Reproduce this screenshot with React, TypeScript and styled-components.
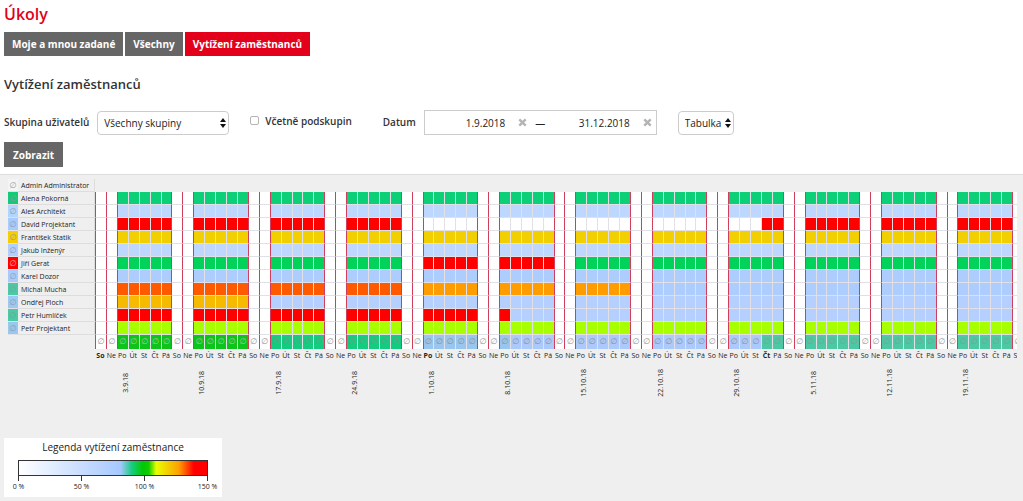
import React from "react";
import styled, { createGlobalStyle } from "styled-components";

const GlobalStyle = createGlobalStyle`
  *, *::before, *::after { box-sizing: border-box; }
  body {
    margin: 0;
    background: #ffffff;
    color: #222222;
    font-family: "Open Sans", "Noto Sans", sans-serif;
    font-size: 10px;
    line-height: 16px;
  }
  button, input, select { font: inherit; color: inherit; margin: 0; }
`;

const RED = "#e2001a";
const LINE = "#e0e0e6";
const WEEK_LINE = "#cf3f5c";

const Page = styled.main`
  display: flex;
  flex-direction: column;
  min-height: 100vh;
`;

const Header = styled.header`
  padding: 4px 4px 7px;
`;

const Title = styled.h1`
  margin: 0 0 8px;
  color: ${RED};
  font-size: 16px;
  line-height: 20px;
  font-weight: 600;
`;

const Tabs = styled.nav`
  display: flex;
  gap: 2px;
`;

const Tab = styled.a<{ $active?: boolean }>`
  padding: 4px 8px;
  background: ${(p) => (p.$active ? RED : "#666666")};
  color: #ffffff;
  font-weight: 700;
  text-decoration: none;
`;

const Subtitle = styled.h2`
  margin: 18px 0 16px;
  color: #333333;
  font-size: 13px;
  line-height: 20px;
  font-weight: 600;
`;

const Filters = styled.form`
  display: flex;
  flex-wrap: wrap;
  align-items: center;
  row-gap: 7px;
`;

const Label = styled.label`
  margin: 0 8px 2px 0;
  color: #333333;
  font-weight: 600;
`;

const SelectBox = styled.span<{ $width: number }>`
  position: relative;
  width: ${(p) => p.$width}px;
  svg {
    position: absolute;
    right: 3px;
    top: 7px;
    pointer-events: none;
  }
`;

const Select = styled.select`
  display: block;
  width: 100%;
  height: 24px;
  padding: 0 6px;
  appearance: none;
  border: 1px solid #cccccc;
  border-radius: 4px;
  background: #ffffff;
`;

const CheckLabel = styled.label`
  display: flex;
  align-items: center;
  gap: 6px;
  margin: 0 31px 4px 21px;
  color: #333333;
  font-weight: 600;
`;

const Checkbox = styled.input`
  width: 9px;
  height: 9px;
  appearance: none;
  border: 1px solid #b4b4b4;
  border-radius: 2px;
  background: #ffffff;
  &:checked { background: #666666; }
`;

const DateRange = styled.div`
  display: flex;
  align-items: center;
  gap: 8px;
  width: 233px;
  height: 25px;
  margin-right: 21px;
  padding: 0 4px;
  border: 1px solid #cccccc;
`;

const DateField = styled.span`
  display: flex;
  flex: 1;
  align-items: center;
  gap: 13px;
  min-width: 0;
`;

const DateInput = styled.input`
  flex: 1;
  min-width: 0;
  padding: 0;
  border: 0;
  outline: 0;
  background: transparent;
  text-align: right;
`;

const ClearButton = styled.button`
  display: flex;
  padding: 0;
  border: 0;
  background: none;
`;

const SubmitRow = styled.div`
  flex-basis: 100%;
`;

const SubmitButton = styled.button`
  display: block;
  height: 25px;
  padding: 0 9px;
  border: 0;
  background: #666666;
  color: #ffffff;
  font-weight: 700;
`;

const Panel = styled.section`
  flex: 1;
  padding: 4px 6px 5px 4px;
  border-top: 1px solid #dddddd;
  background: #efefef;
`;

const ChartClip = styled.div`
  margin-left: 4px;
  overflow: hidden;
`;

const Chart = styled.table`
  display: block;
  width: calc(100% + 6px);
  font-size: 7px;
  line-height: 14px;
  color: #222222;
  thead, tbody, tfoot { display: block; }
`;

const Row = styled.tr<{ $height?: number }>`
  display: grid;
  grid-template-columns: 10px 77px repeat(85, minmax(0, 1fr));
  grid-template-rows: 100%;
  height: ${(p) => p.$height ?? 13}px;
`;

const Swatch = styled.td<{ $color: string; $mark?: string }>`
  padding: 0;
  border-bottom: 1px solid ${LINE};
  background: ${(p) => p.$color};
  color: ${(p) => p.$mark ?? "#8c98a0"};
  font-family: "DejaVu Sans", sans-serif;
  font-size: 8px;
  text-align: center;
`;

const Name = styled.th`
  padding: 0 0 0 3px;
  border: solid #dddddd;
  border-width: 0 1px 1px 0;
  font-weight: 400;
  text-align: left;
  white-space: nowrap;
`;

const Corner = styled.td`
  grid-column: span 2;
  padding: 0;
`;

const Cell = styled.td<{ $color: string; $edge: boolean }>`
  padding: 0;
  border-left: 1px solid ${(p) => (p.$edge ? WEEK_LINE : LINE)};
  border-bottom: 1px solid ${LINE};
  background: ${(p) => p.$color};
`;

const TotalCell = styled(Cell)<{ $mark?: string }>`
  border-bottom: 0;
  color: ${(p) => p.$mark ?? "#8c8c8c"};
  font-family: "DejaVu Sans", sans-serif;
  font-size: 8px;
  text-align: center;
`;

const Day = styled.th<{ $strong: boolean }>`
  display: flex;
  justify-content: center;
  padding: 0;
  font-weight: ${(p) => (p.$strong ? 700 : 400)};
`;

const WeekDate = styled.th<{ $span: number }>`
  grid-column: span ${(p) => p.$span};
  display: flex;
  align-items: center;
  padding: 0 0 0 2px;
  font-weight: 400;
  span {
    writing-mode: vertical-rl;
    transform: rotate(180deg);
    white-space: nowrap;
  }
`;

const Legend = styled.figure`
  width: 218px;
  margin: 35px 0 0;
  padding: 1px 14px 4px;
  background: #ffffff;
`;

const LegendTitle = styled.figcaption`
  margin-bottom: 5px;
  text-align: center;
`;

const Gradient = styled.div`
  height: 16px;
  border: 1px solid #333333;
  background: linear-gradient(
    90deg,
    #ffffff 0%, #a6c8ff 54%, #18cc80 60%, #00c800 66%, #10cc00 69%,
    #e8ff00 73%, #ffa000 85%, #ff0000 93%, #ff0000 100%
  );
`;

const Scale = styled.div`
  display: flex;
  justify-content: space-between;
  font-size: 7px;
  line-height: 12px;
`;

const Tick = styled.span`
  display: flex;
  flex-direction: column;
  align-items: center;
  width: 1px;
  white-space: nowrap;
  &::before {
    content: "";
    width: 1px;
    height: 5px;
    background: #333333;
  }
`;

const EMPTY = "#ffffff";
const MINT = "#0cd078";
const GREEN = "#00d25a";
const SKY = "#bdd7ff";
const BLUE = "#adcdff";
const PERI = "#b5d0ff";
const FULL = "#ff0000";
const GOLD = "#f2cf00";
const AMBER = "#f6bb00";
const ORANGE = "#ff9c00";
const FLAME = "#ff5a00";
const LIME = "#a8ff00";
const TEAL = "#4cc9a4";
const TOTAL_GREEN = "#0cc41a";
const TOTAL_MINT = "#14cc80";

// Lighter or darker signs where the usual grey would sink into the fill.
const marks: Record<string, string> = {
  [TOTAL_GREEN]: "#b4c4b4",
  [TOTAL_MINT]: "#7a9488",
  [TEAL]: "#7f9c94",
  [FULL]: "#ffb0b0",
};

// Runs of working days as [colour, number of days]; every person has 60 of them.
type Runs = [string, number][];

const people: { name: string; swatch: string; runs: Runs }[] = [
  { name: "Alena Pokorná", swatch: "#10cb78", runs: [[MINT, 60]] },
  { name: "Aleš Architekt", swatch: "#b2d5ff", runs: [[SKY, 60]] },
  { name: "David Projektant", swatch: "#a8cbff", runs: [[FULL, 20], [EMPTY, 23], [FULL, 17]] },
  { name: "František Statik", swatch: "#f6ce00", runs: [[GOLD, 60]] },
  { name: "Jakub Inženýr", swatch: "#b0cfff", runs: [[SKY, 60]] },
  { name: "Jiří Gerat", swatch: FULL, runs: [[GREEN, 20], [FULL, 10], [GREEN, 30]] },
  { name: "Karel Dozor", swatch: "#a8cbff", runs: [[BLUE, 60]] },
  { name: "Michal Mucha", swatch: TEAL, runs: [[FLAME, 20], [ORANGE, 15], [BLUE, 25]] },
  { name: "Ondřej Ploch", swatch: "#9cc8f4", runs: [[AMBER, 10], [PERI, 50]] },
  { name: "Petr Humlíček", swatch: TEAL, runs: [[FULL, 26], [PERI, 34]] },
  { name: "Petr Projektant", swatch: "#98c8ee", runs: [[LIME, 60]] },
];

const totals: Runs = [
  [TOTAL_GREEN, 10],
  [TOTAL_MINT, 10],
  ["#98c6ee", 6],
  ["#abc9fb", 17],
  [TEAL, 17],
];

const dayNames = ["So", "Ne", "Po", "Út", "St", "Čt", "Pá"];
const days = Array.from({ length: 85 }, (_, i) => i);
const monthStarts = [0, 30, 61];
const weeks = [
  "3.9.18", "10.9.18", "17.9.18", "24.9.18", "1.10.18", "8.10.18",
  "15.10.18", "22.10.18", "29.10.18", "5.11.18", "12.11.18", "19.11.18",
];

const expand = (runs: Runs) => {
  const working = runs.flatMap(([color, count]) => Array<string>(count).fill(color));
  return days.map((d) => (d % 7 < 2 ? EMPTY : working[Math.floor(d / 7) * 5 + (d % 7) - 2]));
};

const Arrows = () => (
  <svg width="6" height="10" viewBox="0 0 6 10" aria-hidden="true">
    <path d="M3 0 6 4H0ZM3 10 0 6H6Z" fill="#111111" />
  </svg>
);

const Cross = () => (
  <svg width="9" height="9" viewBox="0 0 9 9" aria-hidden="true">
    <path d="M1.3 1.3 7.7 7.7M7.7 1.3 1.3 7.7" stroke="#b4b4b4" strokeWidth="2.4" />
  </svg>
);

export default function App() {
  return (
    <Page>
      <GlobalStyle />
      <Header>
        <Title>Úkoly</Title>
        <Tabs>
          <Tab href="#moje">Moje a mnou zadané</Tab>
          <Tab href="#vsechny">Všechny</Tab>
          <Tab href="#vytizeni" $active>Vytížení zaměstnanců</Tab>
        </Tabs>
        <Subtitle>Vytížení zaměstnanců</Subtitle>
        <Filters onSubmit={(e) => e.preventDefault()}>
          <Label htmlFor="group">Skupina uživatelů</Label>
          <SelectBox $width={132}>
            <Select id="group"><option>Všechny skupiny</option></Select>
            <Arrows />
          </SelectBox>
          <CheckLabel>
            <Checkbox type="checkbox" />
            Včetně podskupin
          </CheckLabel>
          <Label htmlFor="from">Datum</Label>
          <DateRange>
            <DateField>
              <DateInput id="from" defaultValue="1.9.2018" />
              <ClearButton type="button" aria-label="Vymazat datum od"><Cross /></ClearButton>
            </DateField>
            <span>—</span>
            <DateField>
              <DateInput aria-label="Datum do" defaultValue="31.12.2018" />
              <ClearButton type="button" aria-label="Vymazat datum do"><Cross /></ClearButton>
            </DateField>
          </DateRange>
          <SelectBox $width={56}>
            <Select aria-label="Zobrazení"><option>Tabulka</option></Select>
            <Arrows />
          </SelectBox>
          <SubmitRow>
            <SubmitButton>Zobrazit</SubmitButton>
          </SubmitRow>
        </Filters>
      </Header>
      <Panel>
        <ChartClip>
          <Chart>
            <tbody>
              <Row>
                <Swatch $color="#f4f4f4">∅</Swatch>
                <Name scope="row">Admin Administrator</Name>
              </Row>
              {people.map((person) => (
                <Row key={person.name}>
                  <Swatch $color={person.swatch} $mark={marks[person.swatch]}>∅</Swatch>
                  <Name scope="row">{person.name}</Name>
                  {expand(person.runs).map((color, d) => (
                    <Cell key={d} $color={color} $edge={d % 7 < 3} />
                  ))}
                </Row>
              ))}
              <Row $height={14}>
                <Corner />
                {expand(totals).map((color, d) => (
                  <TotalCell key={d} $color={color} $mark={marks[color]} $edge={d % 7 < 3}>∅</TotalCell>
                ))}
              </Row>
            </tbody>
            <tfoot>
              <Row>
                <Corner />
                {days.map((d) => (
                  <Day key={d} scope="col" $strong={monthStarts.includes(d)}>{dayNames[d % 7]}</Day>
                ))}
              </Row>
              <Row $height={41}>
                <Corner />
                <WeekDate $span={2} />
                {weeks.map((week, i) => (
                  <WeekDate key={week} $span={i === weeks.length - 1 ? 6 : 7}>
                    <span>{week}</span>
                  </WeekDate>
                ))}
              </Row>
            </tfoot>
          </Chart>
        </ChartClip>
        <Legend>
          <LegendTitle>Legenda vytížení zaměstnance</LegendTitle>
          <Gradient />
          <Scale>
            <Tick>0 %</Tick>
            <Tick>50 %</Tick>
            <Tick>100 %</Tick>
            <Tick>150 %</Tick>
          </Scale>
        </Legend>
      </Panel>
    </Page>
  );
}
